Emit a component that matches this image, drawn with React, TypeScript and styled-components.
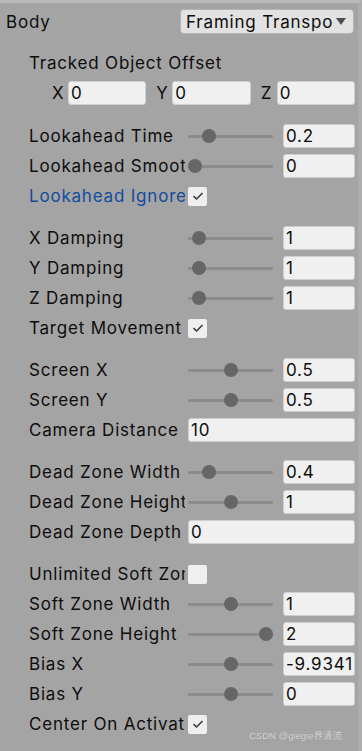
import React from "react";
import styled, { createGlobalStyle } from "styled-components";

const Global = createGlobalStyle`
  html, body { margin: 0; padding: 0; background: #a4a4a4; }
  * { box-sizing: border-box; }
`;

const Panel = styled.div`
  position: relative;
  width: 362px;
  height: 751px;
  overflow: hidden;
  background: #a4a4a4;
  border-top: 3px solid #bababa;
  border-right: 4px solid #adadad;
  font-family: Inter, "Noto Sans", sans-serif;
  font-size: 17px;
  letter-spacing: 0.8px;
  color: #0d0d0d;
  display: flex;
  flex-direction: column;
`;

const HeaderRow = styled.div`
  display: flex;
  align-items: center;
  justify-content: space-between;
  height: 27px;
  margin-top: 5px;
  padding: 0 4px 0 6px;
`;

const Dropdown = styled.div`
  width: 174px;
  height: 25px;
  border-radius: 4px;
  background: #e2e2e2;
  border: 1px solid #b4b4b4;
  display: flex;
  align-items: center;
  padding: 0 7px 0 5px;
  gap: 3px;
`;

const DropText = styled.span`
  flex: 1;
  overflow: hidden;
  white-space: nowrap;
`;

const Arrow = styled.span`
  width: 0;
  height: 0;
  border-left: 5px solid transparent;
  border-right: 5px solid transparent;
  border-top: 7px solid #4e4e4e;
`;

const Indented = styled.div`
  display: flex;
  flex-direction: column;
  padding: 0 3px 0 29px;
`;

const Spacer = styled.div<{ $h: number }>`
  height: ${(p) => p.$h}px;
  flex-shrink: 0;
`;

const Row = styled.div`
  height: 30px;
  display: flex;
  align-items: center;
`;

const Label = styled.div<{ $blue?: boolean }>`
  width: 156px;
  margin-right: 3px;
  flex-shrink: 0;
  overflow: hidden;
  white-space: nowrap;
  color: ${(p) => (p.$blue ? "#134c9c" : "#0d0d0d")};
`;

const VecRow = styled.div`
  height: 30px;
  display: flex;
  align-items: center;
  gap: 9px;
  padding-left: 22px;
`;

const VecCell = styled.div`
  flex: 1;
  display: flex;
  align-items: center;
`;

const VecLabel = styled.span`
  width: 17px;
  flex-shrink: 0;
  padding-left: 1px;
`;

const Field = styled.div<{ $w?: number }>`
  height: 24px;
  ${(p) => (p.$w ? `width: ${p.$w}px;` : "flex: 1;")}
  background: #f0f0f0;
  border: 1px solid #cfcfcf;
  border-radius: 3px;
  display: flex;
  align-items: center;
  padding: 0 2px 0 2px;
`;

const FieldText = styled.span`
  flex: 1;
  overflow: hidden;
  white-space: nowrap;
`;

const SliderBox = styled.div`
  position: relative;
  width: 85px;
  height: 24px;
  margin-right: 10px;
  display: flex;
  align-items: center;
`;

const Track = styled.div`
  width: 100%;
  height: 3px;
  background: #8c8c8c;
  border-radius: 1px;
`;

const Thumb = styled.div`
  position: absolute;
  top: 5px;
  width: 14px;
  height: 14px;
  border-radius: 50%;
  background: #666666;
`;

const Check = styled.div`
  width: 19px;
  height: 19px;
  border-radius: 2px;
  background: #efefef;
  display: flex;
  align-items: center;
  justify-content: center;
`;

const Watermark = styled.div`
  position: absolute;
  right: 16px;
  bottom: 9px;
  font-family: "Liberation Sans", "Noto Sans CJK SC", sans-serif;
  font-size: 9.5px;
  letter-spacing: 0;
  color: #d8d8d8;
  text-shadow: 0 0 1px #8a8a8a;
`;

const Tick = () => (
  <svg width="12" height="10" viewBox="0 0 12 10">
    <path d="M1.5 5.2 L4.6 8 L10.5 2" fill="none" stroke="#3a3a3a" strokeWidth="1.6" />
  </svg>
);

type SliderProps = { label: string; value: string; pos: number };

const SliderRow = ({ label, value, pos }: SliderProps) => (
  <Row>
    <Label>{label}</Label>
    <SliderBox>
      <Track />
      <Thumb style={{ left: `${pos * 71}px` }} />
    </SliderBox>
    <Field $w={72}>
      <FieldText>{value}</FieldText>
    </Field>
  </Row>
);

const FieldRow = ({ label, value }: { label: string; value: string }) => (
  <Row>
    <Label>{label}</Label>
    <Field>
      <FieldText>{value}</FieldText>
    </Field>
  </Row>
);

const CheckRow = ({ label, checked, blue }: { label: string; checked: boolean; blue?: boolean }) => (
  <Row>
    <Label $blue={blue}>{label}</Label>
    <Check>{checked && <Tick />}</Check>
  </Row>
);

export default function App() {
  return (
    <>
      <Global />
      <Panel>
        <HeaderRow>
          <span>Body</span>
          <Dropdown>
            <DropText>Framing Transposer</DropText>
            <Arrow />
          </Dropdown>
        </HeaderRow>
        <Indented>
          <Spacer $h={13} />
          <Row>Tracked Object Offset</Row>
          <VecRow>
            <VecCell>
              <VecLabel>X</VecLabel>
              <Field>
                <FieldText>0</FieldText>
              </Field>
            </VecCell>
            <VecCell>
              <VecLabel>Y</VecLabel>
              <Field>
                <FieldText>0</FieldText>
              </Field>
            </VecCell>
            <VecCell>
              <VecLabel>Z</VecLabel>
              <Field>
                <FieldText>0</FieldText>
              </Field>
            </VecCell>
          </VecRow>
          <Spacer $h={13} />
          <SliderRow label="Lookahead Time" value="0.2" pos={0.2} />
          <SliderRow label="Lookahead Smoothing" value="0" pos={0} />
          <CheckRow label="Lookahead Ignore Y" checked blue />
          <Spacer $h={12} />
          <SliderRow label="X Damping" value="1" pos={0.05} />
          <SliderRow label="Y Damping" value="1" pos={0.05} />
          <SliderRow label="Z Damping" value="1" pos={0.05} />
          <CheckRow label="Target Movement Only" checked />
          <Spacer $h={12} />
          <SliderRow label="Screen X" value="0.5" pos={0.5} />
          <SliderRow label="Screen Y" value="0.5" pos={0.5} />
          <FieldRow label="Camera Distance" value="10" />
          <Spacer $h={12} />
          <SliderRow label="Dead Zone Width" value="0.4" pos={0.2} />
          <SliderRow label="Dead Zone Height" value="1" pos={0.5} />
          <FieldRow label="Dead Zone Depth" value="0" />
          <Spacer $h={12} />
          <CheckRow label="Unlimited Soft Zone" checked={false} />
          <SliderRow label="Soft Zone Width" value="1" pos={0.5} />
          <SliderRow label="Soft Zone Height" value="2" pos={1} />
          <SliderRow label="Bias X" value="-9.934186e-09" pos={0.5} />
          <SliderRow label="Bias Y" value="0" pos={0.5} />
          <CheckRow label="Center On Activate" checked />
        </Indented>
        <Watermark>CSDN @giegie界清流</Watermark>
      </Panel>
    </>
  );
}
